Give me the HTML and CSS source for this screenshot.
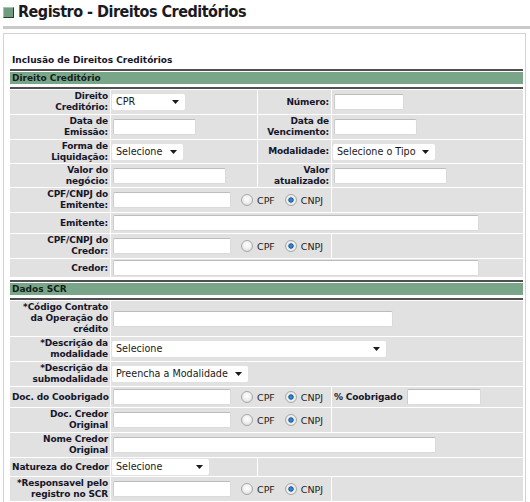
FILE: index.html
```html
<!DOCTYPE html>
<html lang="pt-BR">
<head>
<meta charset="utf-8">
<title>Registro - Direitos Creditórios</title>
<link rel="stylesheet" href="styles.css">
</head>
<body>
<div class="page">
  <h1 class="title"><span class="ico"></span>Registro - Direitos Creditórios</h1>
  <div class="box">
    <h2 class="subtitle">Inclusão de Direitos Creditórios</h2>

    <div class="sec"><div class="sec-bar">Direito Creditório</div></div>
    <table class="form">
      <colgroup><col class="c1"><col class="c2"><col class="c3"><col class="c4"></colgroup>
      <tr class="h24">
        <td class="lbl">Direito<br>Creditório:</td>
        <td class="fld"><span class="sel w73"><select><option>CPR</option></select><svg class="arr" width="7" height="4" viewBox="0 0 7 4"><path d="M0 0H7L3.5 4Z"/></svg></span></td>
        <td class="lbl">Número:</td>
        <td class="fld"><input class="txt w70" type="text"></td>
      </tr>
      <tr class="h24">
        <td class="lbl">Data de<br>Emissão:</td>
        <td class="fld"><input class="txt w83" type="text"></td>
        <td class="lbl">Data de<br>Vencimento:</td>
        <td class="fld"><input class="txt w83" type="text"></td>
      </tr>
      <tr class="h23">
        <td class="lbl">Forma de<br>Liquidação:</td>
        <td class="fld"><span class="sel w71"><select><option>Selecione</option></select><svg class="arr" width="7" height="4" viewBox="0 0 7 4"><path d="M0 0H7L3.5 4Z"/></svg></span></td>
        <td class="lbl">Modalidade:</td>
        <td class="fld"><span class="sel w102"><select><option>Selecione o Tipo</option></select><svg class="arr" width="7" height="4" viewBox="0 0 7 4"><path d="M0 0H7L3.5 4Z"/></svg></span></td>
      </tr>
      <tr class="h23">
        <td class="lbl">Valor do<br>negócio:</td>
        <td class="fld"><input class="txt w113" type="text"></td>
        <td class="lbl">Valor<br>atualizado:</td>
        <td class="fld"><input class="txt w113" type="text"></td>
      </tr>
      <tr class="h24">
        <td class="lbl">CPF/CNPJ do<br>Emitente:</td>
        <td class="fld" colspan="2"><input class="txt w118" type="text"><label class="rd"><input type="radio" name="emit">CPF</label><label class="rd"><input type="radio" name="emit" checked>CNPJ</label></td>
        <td class="fld"></td>
      </tr>
      <tr class="h20">
        <td class="lbl">Emitente:</td>
        <td class="fld" colspan="3"><input class="txt w366" type="text"></td>
      </tr>
      <tr class="h24">
        <td class="lbl">CPF/CNPJ do<br>Credor:</td>
        <td class="fld" colspan="2"><input class="txt w118" type="text"><label class="rd"><input type="radio" name="cred">CPF</label><label class="rd"><input type="radio" name="cred" checked>CNPJ</label></td>
        <td class="fld"></td>
      </tr>
      <tr class="h18">
        <td class="lbl">Credor:</td>
        <td class="fld" colspan="3"><input class="txt w366" type="text"></td>
      </tr>
    </table>

    <div class="sec sec2"><div class="sec-bar">Dados SCR</div></div>
    <table class="form">
      <colgroup><col class="c1"><col class="c2"><col class="c3"><col class="c4"></colgroup>
      <tr class="h35">
        <td class="lbl">*Código Contrato<br>da Operação do<br>crédito</td>
        <td class="fld" colspan="3"><input class="txt w280" type="text"></td>
      </tr>
      <tr class="h24">
        <td class="lbl">*Descrição da<br>modalidade</td>
        <td class="fld" colspan="3"><span class="sel w274"><select><option>Selecione</option></select><svg class="arr" width="7" height="4" viewBox="0 0 7 4"><path d="M0 0H7L3.5 4Z"/></svg></span></td>
      </tr>
      <tr class="h24">
        <td class="lbl">*Descrição da<br>submodalidade</td>
        <td class="fld" colspan="3"><span class="sel w136"><select><option>Preencha a Modalidade</option></select><svg class="arr" width="7" height="4" viewBox="0 0 7 4"><path d="M0 0H7L3.5 4Z"/></svg></span></td>
      </tr>
      <tr class="h20">
        <td class="lbl">Doc. do Coobrigado</td>
        <td class="fld" colspan="2"><input class="txt w118" type="text"><label class="rd"><input type="radio" name="coob">CPF</label><label class="rd"><input type="radio" name="coob" checked>CNPJ</label></td>
        <td class="fld"><span class="inl">% Coobrigado</span><input class="txt w74" type="text"></td>
      </tr>
      <tr class="h24">
        <td class="lbl">Doc. Credor<br>Original</td>
        <td class="fld" colspan="2"><input class="txt w118" type="text"><label class="rd"><input type="radio" name="orig">CPF</label><label class="rd"><input type="radio" name="orig" checked>CNPJ</label></td>
        <td class="fld"></td>
      </tr>
      <tr class="h24">
        <td class="lbl">Nome Credor<br>Original</td>
        <td class="fld" colspan="3"><input class="txt w323" type="text"></td>
      </tr>
      <tr class="h18">
        <td class="lbl">Natureza do Credor</td>
        <td class="fld"><span class="sel w97"><select><option>Selecione</option></select><svg class="arr" width="7" height="4" viewBox="0 0 7 4"><path d="M0 0H7L3.5 4Z"/></svg></span></td>
        <td class="fld" colspan="2"></td>
      </tr>
      <tr class="h24">
        <td class="lbl">*Responsavel pelo<br>registro no SCR</td>
        <td class="fld" colspan="2"><input class="txt w118" type="text"><label class="rd"><input type="radio" name="resp">CPF</label><label class="rd"><input type="radio" name="resp" checked>CNPJ</label></td>
        <td class="fld"></td>
      </tr>
    </table>
  </div>
</div>
</body>
</html>
```

FILE: styles.css
```css
* { box-sizing: border-box; }

body {
  margin: 0;
  background: #fff;
  font-family: "DejaVu Sans", Verdana, sans-serif;
  font-size: 9px;
  color: #16162a;
}

.page { padding-left: 3px; }

.title {
  margin: 0;
  display: flex;
  align-items: flex-start;
  gap: 4px;
  padding: 2px 0 4px;
  border-bottom: 3px solid #c9c9c9;
  font-family: "DejaVu Sans Condensed", "Liberation Sans", sans-serif;
  font-size: 16px;
  line-height: 20px;
  font-weight: bold;
  letter-spacing: -0.5px;
  color: #1a1a22;
}

.ico {
  flex: none;
  width: 11px;
  height: 11px;
  margin-top: 5px;
  background: #6f9d7e;
  border: 1px solid;
  border-color: #a6c5b0 #263d2e #263d2e #a6c5b0;
}

.box {
  margin-top: 4px;
  width: 523px;
  border: 1px solid #d3d3d3;
  padding: 21px 2px 0 6px;
}

.subtitle {
  margin: 0 0 3px;
  padding-left: 2px;
  font-size: 9px;
  line-height: 11px;
  font-weight: bold;
}

.sec {
  border-top: 2px solid #505050;
  border-bottom: 2px solid #505050;
  padding: 1px 0 3px;
}

.sec2 { margin-top: 2px; }

.sec-bar {
  height: 12px;
  line-height: 12px;
  padding-left: 2px;
  background: #79a689;
  font-weight: bold;
  color: #12201a;
}

.form {
  border-collapse: separate;
  border-spacing: 1px;
  table-layout: fixed;
  width: 515px;
  margin: 0 -1px;
}

.c1 { width: 100px; }
.c2 { width: 146px; }
.c3 { width: 73px; }
.c4 { width: 191px; }

.form td {
  background: #e1e1e1;
  padding: 0 2px 0 1px;
  vertical-align: middle;
  white-space: nowrap;
}

.form td.lbl {
  padding: 0 2px 0 2px;
  text-align: right;
  font-weight: bold;
  line-height: 11px;
  letter-spacing: -0.15px;
}

.h18 td { height: 18px; }
.h20 td { height: 20px; }
.h23 td { height: 23px; }
.h24 td { height: 24px; }
.h35 td { height: 35px; }

.txt {
  height: 16px;
  margin: 0 0 0 1px;
  padding: 0 2px;
  border: 1px solid #dadada;
  border-top-color: #bcbcbc;
  border-left-color: #cdcdcd;
  border-radius: 2px;
  background: #fff;
  vertical-align: middle;
  font: 9.5px "DejaVu Sans", sans-serif;
}

.w70 { width: 70px; }
.w74 { width: 74px; }
.w83 { width: 83px; }
.w113 { width: 113px; }
.w118 { width: 118px; }
.w280 { width: 280px; }
.w323 { width: 323px; }
.w366 { width: 366px; }

.sel {
  position: relative;
  display: inline-block;
  vertical-align: middle;
  height: 16px;
  background: #fff;
  border-radius: 2px;
}

.sel.w71 { width: 71px; }
.sel.w73 { width: 73px; }
.sel.w97 { width: 97px; }
.sel.w102 { width: 102px; }
.sel.w136 { width: 136px; }
.sel.w274 { width: 274px; }

.sel select {
  -webkit-appearance: none;
  appearance: none;
  display: block;
  width: 100%;
  height: 16px;
  margin: 0;
  padding: 0 14px 0 4px;
  border: 0;
  background: transparent;
  font: 9.6px/16px "DejaVu Sans", sans-serif;
  color: #1a1a1a;
  outline: none;
}

.sel .arr {
  position: absolute;
  right: 6px;
  top: 6px;
  fill: #1a1a1a;
  pointer-events: none;
}

.rd {
  display: inline-flex;
  align-items: center;
  vertical-align: middle;
  margin-left: 10px;
  font-size: 9.5px;
  color: #222;
}

.rd input {
  -webkit-appearance: none;
  appearance: none;
  width: 12px;
  height: 12px;
  margin: 0 4px 0 0;
  border: 1px solid #a9a9a9;
  border-radius: 50%;
  background: radial-gradient(circle at 50% 40%, #ffffff 0, #f1f1f1 45%, #d2d2d2 100%);
}

.rd input:checked {
  background: radial-gradient(circle at 50% 50%, #3b9be6 0, #1a5fa8 2.3px, #dcdcdc 3px, #f6f6f6 4px, #d0d0d0 6px);
}

.inl {
  font-weight: bold;
  letter-spacing: -0.15px;
  margin: 0 4px 0 1px;
  vertical-align: middle;
}
```
